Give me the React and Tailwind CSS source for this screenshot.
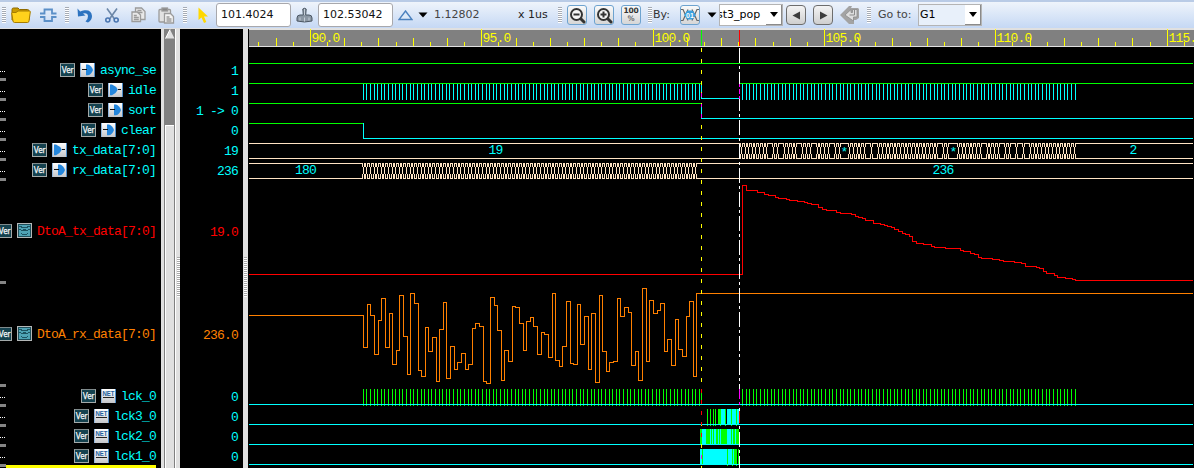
import React from "react";

const MONO = "font-['Liberation_Mono',monospace] text-[13px] tracking-[-0.8px] leading-[14px] whitespace-pre";
const UI = "font-['DejaVu_Sans',sans-serif] text-[11px] leading-[14px] whitespace-pre";

/* ---------- signal list ---------- */

function VerIcon() {
  return (
    <span className="flex h-[14px] w-[15px] shrink-0 items-center justify-center border border-t-[#7f8a8c] border-[#a3a9a9] bg-[#15424f]">
      <svg width="13" height="12" viewBox="0 0 13 12">
        <text x="0.8" y="9.300" fontFamily="DejaVu Sans" fontSize="9.500" textLength="11.800" lengthAdjust="spacingAndGlyphs" fill="#fff" stroke="#fff" strokeWidth="0.250">Ver</text>
      </svg>
    </span>
  );
}

function KindIcon({ kind }) {
  if (kind === "dtoa") {
    return (
      <svg width="15" height="15" viewBox="0 0 15 15" className="shrink-0" shapeRendering="crispEdges">
        <rect width="15" height="15" fill="#b4b8b8" />
        <rect x="1" y="1" width="13" height="13" fill="#1d4d59" />
        <rect x="2" y="2" width="11" height="11" fill="#4fa3b5" />
        <path d="M2 3h3v1h5v-1h3v1h-2v1h-7v-1h-2zM2 6h2v1h2v-1h3v1h2v-1h2v1h-2v1h-7v-1h-2zM4 10h1v1h5v-1h1v1h-1v1h-5v-1h-1z" fill="#1d5361" />
      </svg>
    );
  }
  return (
    <svg width="15" height="14" viewBox="0 0 15 14" className="shrink-0">
      <defs>
        <linearGradient id="tile" x1="0" y1="0" x2="0" y2="1">
          <stop offset="0" stopColor="#ffffff" />
          <stop offset="1" stopColor="#c4c6ca" />
        </linearGradient>
      </defs>
      <rect width="15" height="14" fill="url(#tile)" />
      <path d="M0.500 0V14" stroke="#8fb5dc" />
      <path d="M14.500 0v14" stroke="#4d8cc8" />
      {kind === "in" && (
        <>
          <path d="M6 1.500H8Q11.500 2.500 13 7Q11.500 11.500 8 12.300H6z" fill="#2486dc" />
          <path d="M2 6.500h5" stroke="#111" shapeRendering="crispEdges" />
        </>
      )}
      {kind === "out" && (
        <>
          <path d="M2 1.500H4Q8 3 9.800 6.800Q8 10.800 4 12.300H2z" fill="#2486dc" />
          <path d="M10 6.500h3" stroke="#111" shapeRendering="crispEdges" />
        </>
      )}
      {kind === "net" && (
        <>
          <text x="7.500" y="7" textAnchor="middle" fontSize="7" fontWeight="700" textLength="12" lengthAdjust="spacingAndGlyphs" fontFamily="Liberation Sans" fill="#1d5f9e">NET</text>
          <path d="M2 8.500h11" stroke="#222" shapeRendering="crispEdges" />
        </>
      )}
    </svg>
  );
}

const SIGNALS = [
  { name: "async_se", kind: "in", value: "1" },
  { name: "idle", kind: "out", value: "1" },
  { name: "sort", kind: "in", value: "1 -> 0" },
  { name: "clear", kind: "in", value: "0" },
  { name: "tx_data[7:0]", kind: "out", value: "19" },
  { name: "rx_data[7:0]", kind: "in", value: "236" },
  { name: "DtoA_tx_data[7:0]", kind: "dtoa", value: "19.0", tall: true, tone: "text-[#ff0000]" },
  { name: "DtoA_rx_data[7:0]", kind: "dtoa", value: "236.0", tall: true, tone: "text-[#ff8000]" },
  { name: "lck_0", kind: "net", value: "0" },
  { name: "lck3_0", kind: "net", value: "0" },
  { name: "lck2_0", kind: "net", value: "0" },
  { name: "lck1_0", kind: "net", value: "0" },
];

function NameRow({ s }) {
  return (
    <div className={`relative flex shrink-0 items-center justify-end gap-[5px] pr-[5px] ${s.tall ? "h-[103px] pb-[4px]" : "h-5 pb-[2px]"}`}>
      <VerIcon />
      <KindIcon kind={s.kind} />
      <span className={`${MONO} ${s.tone || "text-[#00ffff]"} ${s.tall ? "pt-[3px]" : "pt-[2px]"}`}>{s.name}</span>
      <span className="absolute bottom-0 left-0 h-[3px] w-[6px] bg-[#858585]" />
      {!s.tall && (
        <span className="absolute left-0 top-[10px] flex gap-[1px]">
          <i className="size-[1px] bg-white" />
          <i className="size-[1px] bg-white" />
          <i className="size-[1px] bg-white" />
        </span>
      )}
    </div>
  );
}

function NamePane() {
  return (
    <div className="flex w-[161px] shrink-0 flex-col overflow-hidden bg-black pt-[32px]">
      {SIGNALS.map((s) => (
        <NameRow key={s.name} s={s} />
      ))}
      <div className="relative h-0">
        <span className="absolute -top-[2px] left-[6px] h-[3px] w-[150px] bg-[#ffff00]" />
      </div>
    </div>
  );
}

function ValuePane() {
  return (
    <div className="flex w-[63px] shrink-0 flex-col overflow-hidden bg-black pt-[32px]">
      {SIGNALS.map((s) => (
        <div key={s.name} className={`flex shrink-0 items-center justify-end pr-[5px] ${MONO} ${s.tone || "text-[#00ffff]"} ${s.tall ? "h-[103px]" : "h-5 pt-[1px]"}`}>
          {s.value}
        </div>
      ))}
    </div>
  );
}

function Splitter({ wide }) {
  return (
    <div className={`flex shrink-0 justify-center bg-[#e0e0e0] pt-[228px] ${wide ? "w-[5px]" : "w-[4px]"}`}>
      <div className="h-[40px] w-[3px] bg-[repeating-linear-gradient(180deg,#a9a9a9_0_1px,#ffffff_1px_2px)]" />
    </div>
  );
}

function ScrollBar() {
  return (
    <div className="flex w-[15px] shrink-0 flex-col border-l-[3px] border-[#e0e0e0] bg-[#808080]">
      <svg width="12" height="12" viewBox="0 0 12 12" className="shrink-0">
        <path d="M6 0.500L10.500 9.500H1.500z" fill="#e0e0e0" />
        <path d="M6 0.500L1.500 9.500" stroke="#fff" />
        <rect x="11" width="1" height="12" fill="#fff" />
      </svg>
      <div className="h-[84px] shrink-0 border-r border-white" />
      <div className="flex grow border-r border-white">
        <div className="ml-[1px] mr-[1px] grow border-l border-t border-white bg-[#e0e0e0]" />
      </div>
    </div>
  );
}

/* ---------- waveforms ---------- */

const LEFT = 249;
const TOP = 29;
const END = 1193;

const RX = [
  [0, 106], [25, 203], [37, 73], [46, 106], [58, 223], [70, 121], [79, 55], [91, 203], [103, 100], [112, 253], [124, 211],
  [133, 46], [145, 169], [157, 283], [166, 40], [178, 70], [190, 271], [199, 289], [211, 142], [220, 214], [232, 172],
  [244, 304], [253, 148], [265, 67], [274, 295], [286, 199], [298, 268], [307, 247], [319, 220], [331, 268], [340, 253],
  [352, 145], [361, 130], [373, 139], [385, 304], [394, 310], [406, 52], [418, 76], [427, 151], [439, 301], [448, 211],
  [460, 244], [472, 79], [481, 82], [493, 130], [505, 211], [514, 124], [526, 112], [535, 139], [547, 223], [559, 157],
  [568, 163], [580, 232], [592, 40], [601, 241], [613, 259], [622, 199], [634, 64], [646, 250], [655, 253], [667, 73],
  [676, 193], [688, 109], [700, 268], [709, 100], [721, 307], [733, 46], [742, 214], [754, 274], [763, 247], [775, 244],
  [787, 55], [796, 109], [808, 82], [820, 97], [829, 256], [841, 214], [850, 301], [862, 25], [874, 244], [883, 61],
  [895, 100], [907, 91], [916, 70], [928, 214], [937, 178], [949, 256], [961, 118], [970, 208], [982, 229], [994, 109],
  [1003, 64], [1015, 289], [1024, 40],
];

const TX = [
  [0, 283], [22, 16], [34, 31], [67, 37], [88, 43], [100, 46], [121, 52], [130, 55], [154, 58], [163, 61], [187, 64],
  [208, 67], [217, 70], [229, 73], [250, 82], [262, 88], [274, 91], [304, 97], [316, 100], [349, 103], [361, 109],
  [370, 112], [382, 115], [391, 121], [415, 130], [436, 133], [448, 136], [457, 139], [469, 142], [478, 148], [490, 154],
  [502, 160], [511, 163], [523, 169], [532, 184], [544, 190], [565, 193], [589, 199], [598, 202], [631, 205], [676, 211],
  [685, 214], [706, 220], [718, 223], [730, 232], [739, 235], [772, 238], [793, 241], [805, 244], [838, 247], [859, 250],
  [871, 259], [904, 262], [913, 265], [925, 274], [934, 280], [958, 286], [967, 292], [991, 295], [1012, 298], [1021, 301],
];

/* Builds a stepped polyline from samples stored in thirds of a pixel. */
function steps(data, ox, oy) {
  let d = "";
  data.forEach(([x, y], i) => {
    const py = oy + Math.floor(y / 3) + 0.5;
    d += i === 0 ? `M${LEFT} ${py}` : `H${ox + Math.floor(x / 3) + 0.5}V${py}`;
  });
  return d + `H${END}`;
}

const PITCH = 3.617;
const series = (start, count) => Array.from({ length: count }, (_, k) => Math.floor(start + k * PITCH));
const LEFT_TICKS = series(363.15, 94);
const RIGHT_TICKS = series(742.4, 93);

function ticks(xs, y0, y1) {
  return xs.map((x) => `M${x + 0.5} ${y0}V${y1}`).join("");
}

/* Bus outline: two rails with a narrow crossing at each change. */
function bus(xs, top) {
  const a = top + 0.5;
  const b = top + 15.5;
  let d = "";
  let from = LEFT;
  xs.forEach((x) => {
    d += `M${from} ${a}H${x}M${from} ${b}H${x}`;
    d += `M${x - 0.5} ${top}V${top + 4}M${x + 1.5} ${top}V${top + 4}`;
    d += `M${x + 0.5} ${top + 4}V${top + 11}`;
    d += `M${x - 0.5} ${top + 11}V${top + 16}M${x + 1.5} ${top + 11}V${top + 16}`;
    from = x + 1;
  });
  return d + `M${from} ${a}H${END}M${from} ${b}H${END}`;
}

const TX_SKIP = [8, 11, 16, 20, 25, 28, 29, 35, 37, 55, 58, 59, 67, 72, 75, 77, 79];
const TX_CHANGES = series(741.4, 93).filter((_, k) => !TX_SKIP.includes(k));
const RX_CHANGES = series(363.15, 93);

const BURSTS = [
  [718, 409, 3, "g"], [721, 409, 4, "c"], [725, 409, 1, "g"], [727, 409, 4, "c"], [731, 409, 1, "g"], [732, 409, 4, "c"], [736, 409, 1, "g"], [737, 409, 2, "c"],
  [700, 429, 2, "g"], [702, 429, 4, "c"], [706, 429, 4, "g"], [710, 429, 1, "c"], [711, 429, 1, "g"], [712, 429, 1, "c"], [713, 429, 1, "g"], [714, 429, 2, "c"],
  [716, 429, 2, "g"], [718, 429, 1, "c"], [719, 429, 1, "g"], [720, 429, 1, "c"], [721, 429, 6, "g"], [727, 429, 4, "c"], [731, 429, 1, "g"], [732, 429, 1, "c"],
  [733, 429, 2, "g"], [735, 429, 1, "c"], [736, 429, 3, "g"],
  [700, 449, 2, "c"], [702, 449, 1, "g"], [703, 449, 24, "c"], [727, 449, 1, "g"], [728, 449, 4, "c"], [732, 449, 1, "g"], [733, 449, 1, "c"], [734, 449, 3, "g"], [738, 449, 1, "g"],
];

function WaveView() {
  const G = "#00ff00";
  const C = "#00ffff";
  const B = "#ffe4c4";
  const marks = [];
  for (let k = -3; k <= 51; k++) {
    const x = Math.round(310 + (k * 171.35) / 10 - 0.1);
    if (x >= END + 1) continue;
    const len = k % 10 === 0 ? 17 : k % 2 === 0 ? 8 : 4;
    marks.push(`M${x + 0.5} ${46 - len}V46`);
  }
  const label = { fontFamily: "Liberation Mono, monospace", fontSize: 13, letterSpacing: -0.8 };
  return (
    <svg width="945" height="439" viewBox={`${LEFT} ${TOP} 945 439`} className="block shrink-0">
      <g shapeRendering="crispEdges" fill="none">
        <rect x="249" y="29" width="945" height="439" fill="#000" />
        <rect x="249" y="29" width="945" height="18" fill="#e0e0e0" />
        <rect x="249" y="30" width="945" height="16" fill="#808080" />
        <path d={marks.join("")} stroke="#ffff00" />

        <path d={`M249 63.5H${END}M249 83.5H701M739 83.5H${END}M249 103.5H702M249 123.5H363`} stroke={G} />
        <path d={`${ticks(LEFT_TICKS, 84, 100)}${ticks(RIGHT_TICKS, 84, 100)}`} stroke={C} />
        <path d="M701.5 84V98.5H739" stroke={C} />
        <path d={`M701.5 104V118.5H${END}M363.5 123V138.5H${END}`} stroke={C} />
        <path d={bus(TX_CHANGES, 143)} stroke={B} />
        <path d={bus(RX_CHANGES, 163)} stroke={B} />

        <path d={steps(TX, 735, 180)} stroke="#ff0000" />
        <path d={steps(RX, 355, 280)} stroke="#ff8000" />

        <path d={`${ticks(LEFT_TICKS, 389, 406)}${ticks(RIGHT_TICKS, 389, 406)}M701.5 389V404`} stroke={G} />
        <path d={ticks([707, 710, 713, 715], 409, 426)} stroke={G} />
        {BURSTS.map(([x, y, w, c], i) => (
          <rect key={i} x={x} y={y} width={w} height="16" fill={c === "g" ? G : C} />
        ))}
        <path d={`M249 404.5H${END}M249 424.5H${END}M249 444.5H${END}M249 464.5H${END}`} stroke={C} />
        <path d="M720.5 425v1M725.5 425v1M731.5 425v1M736.5 425v1M727.5 465v1M732.5 465v1M736.5 465v1" stroke={G} />

        <path d="M701.5 48V468" stroke="#ffff00" strokeDasharray="4 7" />
        <path d="M739.5 48V468" stroke="#ffffff" strokeDasharray="15 3 3 3" />
        <path d="M701.5 93v4M701.5 104v3M701.5 114v4M739.5 84v3M739.5 89v5M739.5 96v3M739.5 389v10M739.5 402v3M701.5 455v4" stroke="#ff00ff" />
        <path d="M701.5 389v4M701.5 400v4M701.5 411v4M701.5 422v3M701.5 433v4M739.5 411v12" stroke="#ff0000" />
        <path d="M701.5 30V46" stroke={G} />
        <path d="M739.5 30V46" stroke="#ff0000" />
      </g>
      <g style={label} fill="#ffff00">
        {[[311.5, "90.0"], [482.5, "95.0"], [654.5, "100.0"], [825.5, "105.0"], [996.5, "110.0"], [1168.5, "115.0"]].map(([x, t]) => (
          <text key={t} x={x} y="42">{t}</text>
        ))}
      </g>
      <g style={label} fill={C}>
        <text x="295" y="174">180</text>
        <text x="488.500" y="154">19</text>
        <text x="840.500" y="156">*</text>
        <text x="949.500" y="156">*</text>
        <text x="1129.500" y="154">2</text>
        <text x="932.500" y="174">236</text>
      </g>
    </svg>
  );
}

/* ---------- toolbar ---------- */

function Grip({ className = "" }) {
  return <span className={`h-[16px] w-[4px] shrink-0 bg-[repeating-linear-gradient(180deg,#a5abb5_0_1px,#ffffff_1px_2px)] ${className}`} />;
}

function Caret({ className }) {
  return (
    <svg width="10" height="6" viewBox="0 0 10 6" className={`shrink-0 ${className}`}>
      <path d="M0.500 0.500h9L5 5.500z" fill="#000" />
    </svg>
  );
}

function Field({ children, className }) {
  return (
    <span className={`flex h-6 w-[75px] shrink-0 items-center rounded-[3px] border border-[#a8a8ac] bg-white pb-[1px] pl-[4px] text-[#111] ${UI} ${className}`}>
      {children}
    </span>
  );
}

function ToolButton({ children, className = "" }) {
  return (
    <span className={`flex size-5 shrink-0 items-center justify-center rounded-[3px] border border-[#6ea3cf] bg-gradient-to-b from-[#fafafa] to-[#d6d6d6] ${className}`}>
      {children}
    </span>
  );
}

function NavButton({ flip, className }) {
  return (
    <span className={`flex size-5 shrink-0 items-center justify-center rounded-[4px] border border-[#6d6d6d] bg-gradient-to-b from-[#f4f4f4] to-[#cfcfcf] ${className}`}>
      <svg width="9" height="9" viewBox="0 0 9 9">
        <path d={flip ? "M1 0.500L8.500 4.500L1 8.500z" : "M8 0.500L0.500 4.500L8 8.500z"} fill="#3c3c3c" />
      </svg>
    </span>
  );
}

function Combo({ text, className = "", inner, clip }) {
  return (
    <span className={`flex h-[22px] w-[64px] shrink-0 overflow-hidden border border-[#b4b4b4] ${UI} ${className}`}>
      <span className={`flex min-w-0 grow items-center overflow-hidden pb-[1px] text-black ${inner}`}>
        <span className={clip ? "-ml-[3px]" : ""}>{text}</span>
      </span>
      <span className="flex w-[16px] shrink-0 items-center justify-center border-b border-r border-[#8a8a8a] bg-white">
        <svg width="8" height="5" viewBox="0 0 8 5"><path d="M0 0h8L4 5z" fill="#000" /></svg>
      </span>
    </span>
  );
}

function Magnifier({ plus }) {
  return (
    <svg width="17" height="17" viewBox="0 0 17 17" fill="none" stroke="#333" className="shrink-0">
      <circle cx="7.500" cy="7.500" r="5.500" strokeWidth="2" fill="#f6f6f6" />
      <path d="M12 12L15 15" strokeWidth="3" strokeLinecap="round" />
      <path d={plus ? "M4.500 7.500h6M7.500 4.500v6" : "M4.500 7.500h6"} strokeWidth="2" />
    </svg>
  );
}

function Toolbar() {
  return (
    <div className="flex h-[28px] w-full shrink-0 items-center overflow-hidden border-t-2 border-[#b9cbe6] bg-gradient-to-b from-[#eff4fb] to-[#c5d8f4]">
      <Grip className="ml-[2px]" />
      <svg width="20" height="17" viewBox="0 0 20 17" className="ml-[5px] shrink-0">
        <path d="M1 4V2.500Q1 1 2.500 1h4.500l1.500 1.500h8Q18 2.500 18 4v9H1z" fill="#c99a00" stroke="#8f6a00" />
        <path d="M0.700 6Q0.700 5.500 1.500 5.500H5l2-1.500h11.500q1 0 .8 1L18 14q-.2 1.500-1.500 1.500h-13q-1.300 0-1.500-1.500z" fill="#ffd21c" stroke="#a67c00" />
      </svg>
      <svg width="17" height="15" viewBox="0 0 17 15" className="ml-[9px] shrink-0" fill="none" stroke="#5b8fc7" strokeWidth="1.800">
        <path d="M0 5.500H4.500V1.500H12V5.500H16.500M0 9H4.500V13H12V9H16.500" />
      </svg>
      <Grip className="ml-[8px]" />
      <svg width="16" height="15" viewBox="0 0 16 15" className="ml-[8px] shrink-0">
        <path d="M0.500 0.500L1 8.500L8.500 7.500L6 5.500Q10.500 4.500 11 8Q11.200 11 8.500 13.500L11 14.500Q15 12 15 8Q14.500 1.500 7.500 2.200Q5 2.500 3.200 3.500z" fill="#2d73c0" />
      </svg>
      <svg width="14" height="15" viewBox="0 0 14 15" className="ml-[12px] shrink-0" fill="none">
        <path d="M2 0.500L9.500 11M12 0.500L4.500 11" stroke="#6c87a8" strokeWidth="1.600" />
        <circle cx="2.800" cy="12" r="2" stroke="#4975b0" strokeWidth="1.600" />
        <circle cx="11.200" cy="12" r="2" stroke="#4975b0" strokeWidth="1.600" />
      </svg>
      <svg width="17" height="16" viewBox="0 0 17 16" className="ml-[12px] shrink-0" fill="#e9e9e9" stroke="#9b9b9b" strokeWidth="1.300">
        <path d="M4.500 1h6l3.500 3.500v8h-9.500z" />
        <path d="M1 5h5.500l3 3v6.500H1z" />
        <path d="M6.500 3.500h4M6.500 5.500h5M2.800 8.500h3M2.800 10.500h5M2.800 12.500h5" />
      </svg>
      <svg width="17" height="17" viewBox="0 0 17 17" className="ml-[10px] shrink-0" fill="#e2e2e2" stroke="#9b9b9b" strokeWidth="1.300">
        <rect x="1" y="2.500" width="11.500" height="12.500" rx="1" />
        <rect x="4" y="1" width="5.500" height="3" fill="#888" />
        <path d="M6.500 6.500h6l3 3v6.500h-9z" fill="#f4f4f4" />
        <path d="M8.500 10h3M8.500 12h5M8.500 14h5" />
      </svg>
      <Grip className="ml-[8px]" />
      <svg width="10" height="17" viewBox="0 0 10 17" className="ml-[11px] shrink-0">
        <path d="M0.500 0.500V13L3.500 10.500L6 16L8.300 15L6 9.500H10z" fill="#ffd800" />
      </svg>
      <Field className="ml-[8px]">101.4024</Field>
      <svg width="17" height="17" viewBox="0 0 17 17" className="ml-[5px] shrink-0" stroke="#4a5663">
        <path d="M6.800 2Q8.500 0.500 10.200 2L9.700 8h3.300q3 0 3 3v3q-7.500 2-15 0V11q0-3 3-3h3.300z" fill="#8b97a4" />
        <path d="M8.500 2v6M4 10.500v3M8.500 10.500v4M13 10.500v3" stroke="#c6ced8" />
      </svg>
      <Field className="ml-[5px]">102.53042</Field>
      <svg width="15" height="11" viewBox="0 0 15 11" className="ml-[5px] shrink-0">
        <path d="M7.500 1L14 9.500H1z" fill="#dce9f8" stroke="#4b80bd" strokeWidth="1.400" />
      </svg>
      <Caret className="ml-[5px]" />
      <span className={`ml-[6px] w-[84px] shrink-0 text-[#444] ${UI}`}>1.12802</span>
      <span className={`w-[10px] shrink-0 text-[#222] ${UI}`}>x</span>
      <span className={`w-[30px] shrink-0 text-[#222] ${UI}`}>1us</span>
      <Grip />
      <ToolButton className="ml-[5px]"><Magnifier /></ToolButton>
      <ToolButton className="ml-[7px]"><Magnifier plus /></ToolButton>
      <ToolButton className="ml-[7px] flex-col font-['DejaVu_Sans',sans-serif] text-[7.500px] font-bold leading-[8px] tracking-[-0.3px] text-[#333]">
        <span>100</span>
        <span className="font-normal">%</span>
      </ToolButton>
      <Grip className="ml-[7px]" />
      <span className={`ml-[1px] w-[27px] shrink-0 text-[#333] ${UI}`}>By:</span>
      <ToolButton>
        <svg width="18" height="16" viewBox="0 0 18 16" className="shrink-0">
          <path d="M0 2.500h2L7 13.500M0 13.500h2L7 2.500M18 2.500h-2L11 13.500M18 13.500h-2L11 2.500" fill="none" stroke="#666" strokeWidth="1.200" />
          <path d="M6.500 3.500h5L15 8l-3.500 4.500h-5L3 8z" fill="#3b9fdd" />
          <text x="9" y="10.500" textAnchor="middle" fontFamily="Liberation Sans" fontWeight="700" fontSize="7" fill="#fff">01</text>
        </svg>
      </ToolButton>
      <Caret className="ml-[7px]" />
      <Combo text="st3_pop" className="ml-[2px]" inner="bg-white" clip />
      <NavButton className="ml-[3px]" />
      <NavButton flip className="ml-[7px]" />
      <svg width="20" height="20" viewBox="0 0 20 20" className="ml-[7px] shrink-0">
        <path d="M0 10L9 1h3L11 3h7l1 1v9l-3 2h-2v4h-5z" fill="#a3a3a3" />
        <path d="M5 10L11 4.500V7.500h1.500V4.500h4.500V12h-3.500v4z" fill="#dedede" stroke="#8b8b8b" strokeWidth="0.800" />
        <path d="M14.500 5v5h-5" stroke="#8b8b8b" fill="none" />
      </svg>
      <Grip className="ml-[7px]" />
      <span className={`ml-[7px] w-[40px] shrink-0 text-[#444] ${UI}`}>Go to:</span>
      <Combo text="G1" inner="bg-[#e8f0fa] pl-[1px]" />
    </div>
  );
}

export default function App() {
  return (
    <div className="flex h-[468px] w-[1194px] flex-col overflow-hidden bg-[#e0e0e0]">
      <Toolbar />
      <div className="flex h-[440px] shrink-0 pt-[1px]">
        <NamePane />
        <ScrollBar />
        <Splitter />
        <ValuePane />
        <Splitter wide />
        <div className="w-[1px] shrink-0 bg-black" />
        <WaveView />
      </div>
    </div>
  );
}
